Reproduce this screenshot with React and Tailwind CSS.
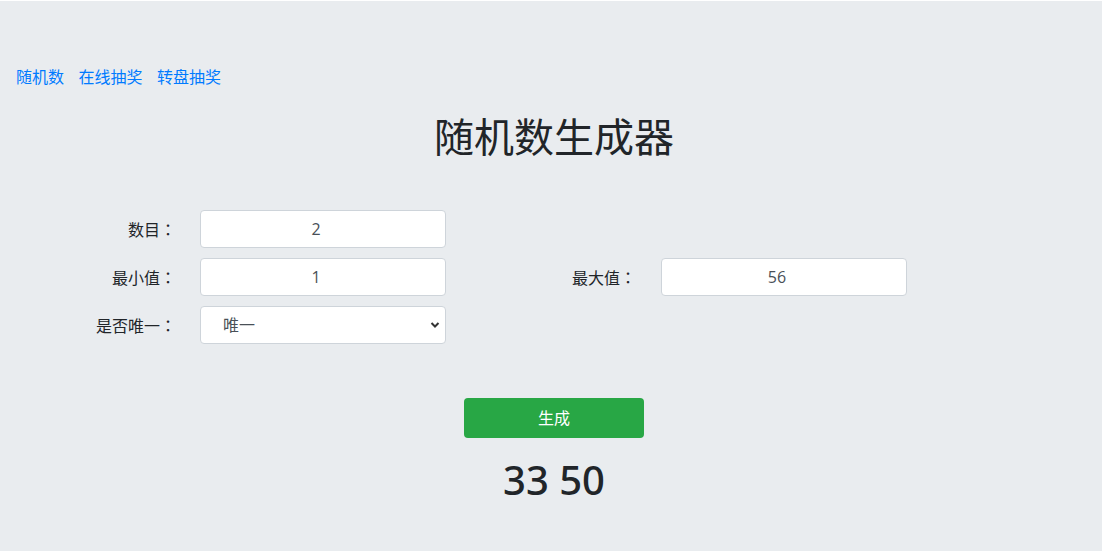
import React from "react";

const font = { fontFamily: '"Open Sans", "Noto Sans CJK SC", sans-serif' };

function Colon() {
  return <span className="font-['Noto_Sans_CJK_TC',sans-serif]">：</span>;
}

function Field({ label, value, labelW, gap }) {
  return (
    <div className="flex items-center">
      <div className="text-right text-[16px] text-[#212529] [text-spacing-trim:space-all]" style={{ width: labelW }}>{label}<Colon /></div>
      <input
        readOnly
        value={value}
        className="h-[38px] w-[246px] rounded-[4px] border border-[#ced4da] bg-white pr-[14px] text-center text-[16px] text-[#495057] outline-none"
        style={{ marginLeft: gap }}
      />
    </div>
  );
}

export default function App() {
  return (
    <div className="bg-white pt-px pr-px" style={font}>
      <div className="h-[550px] bg-[#e9ecef] pl-4 pr-[10px]">
        <div className="pt-[64px] flex gap-[14.5px] text-[16px] leading-[24px] text-[#007bff]">
          <a href="#">随机数</a>
          <a href="#">在线抽奖</a>
          <a href="#">转盘抽奖</a>
        </div>
        <h1 className="mt-[24px] text-center text-[40px] leading-[48px] font-normal text-[#212529]">随机数生成器</h1>
        <div className="mt-[49px] -ml-4 flex flex-col gap-[10px]">
          <Field label="数目" value="2" labelW="176px" gap="24px" />
          <div className="flex items-center">
            <Field label="最小值" value="1" labelW="176px" gap="24px" />
            <Field label="最大值" value="56" labelW="190px" gap="25px" />
          </div>
          <div className="flex items-center">
            <div className="w-[176px] text-right text-[16px] text-[#212529] [text-spacing-trim:space-all]">是否唯一<Colon /></div>
            <div className="relative ml-[24px] h-[38px] w-[246px] rounded-[4px] border border-[#ced4da] bg-white flex items-center pl-[22px] text-[16px] text-[#495057]">
              <span>唯一</span>
              <svg className="absolute right-[5px] top-[14px]" width="10" height="8" viewBox="0 0 10 8">
                <path d="M1.5 2 L5 5.5 L8.5 2" fill="none" stroke="#333" strokeWidth="2" />
              </svg>
            </div>
          </div>
        </div>
        <div className="mt-[54px] flex justify-center">
          <button className="h-[40px] w-[180px] rounded-[4px] bg-[#28a745] text-[16px] text-white">生成</button>
        </div>
        <div className="mt-[18px] text-center text-[40px] leading-[48px] font-medium font-['Noto_Sans',sans-serif] text-[#212529]">33 50</div>
      </div>
    </div>
  );
}
